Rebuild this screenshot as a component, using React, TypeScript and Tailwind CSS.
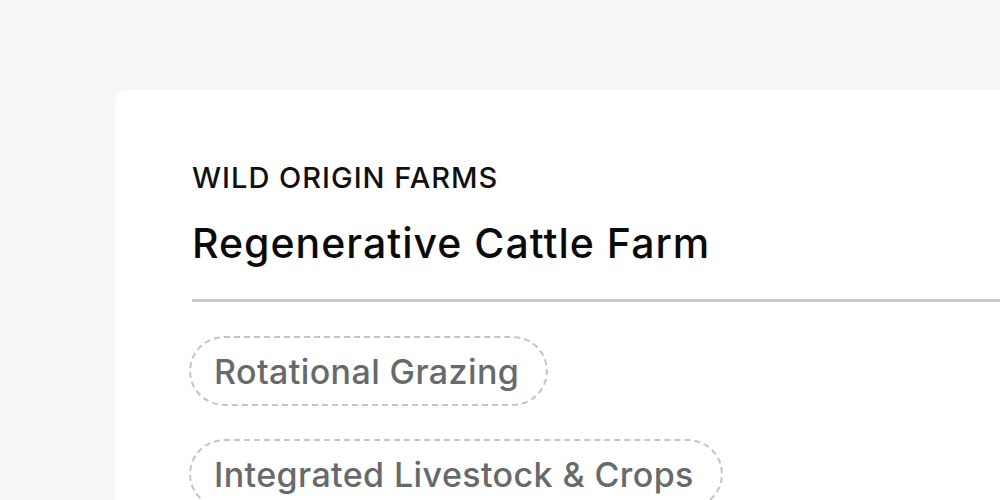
import React from 'react';

const TAGS = ['Rotational Grazing', 'Integrated Livestock & Crops'];

export default function App() {
  return (
    <div
      className="h-[500px] w-[1000px] overflow-hidden bg-[#f7f7f7] pl-[115px] pt-[90px]"
      style={{ fontFamily: 'Inter, "Noto Sans", sans-serif' }}
    >
      <div className="min-h-[600px] w-[1000px] rounded-tl-[12px] bg-white pl-[77px] pt-[71px]">
        <div className="text-[29px] leading-[34px] font-medium tracking-[1px] text-[#111]">WILD ORIGIN FARMS</div>
        <h1 className="mt-[24px] text-[41px] leading-[48px] font-medium tracking-[1px] text-[#0b0b0b]">
          Regenerative Cattle Farm
        </h1>
        <div className="mt-[32px] h-[3px] w-full bg-[#c6c9cf]" />
        <div className="mt-[34px] flex flex-col items-start gap-[33px]">
          {TAGS.map(t => (
            <span
              key={t}
              className="-ml-[3px] flex h-[70px] items-center rounded-full border-2 border-dashed border-[#c2c5c8] pl-[23px] pr-[27px] text-[34px] font-medium tracking-[0.4px] text-[#67696b]"
            >
              {t}
            </span>
          ))}
        </div>
      </div>
    </div>
  );
}
